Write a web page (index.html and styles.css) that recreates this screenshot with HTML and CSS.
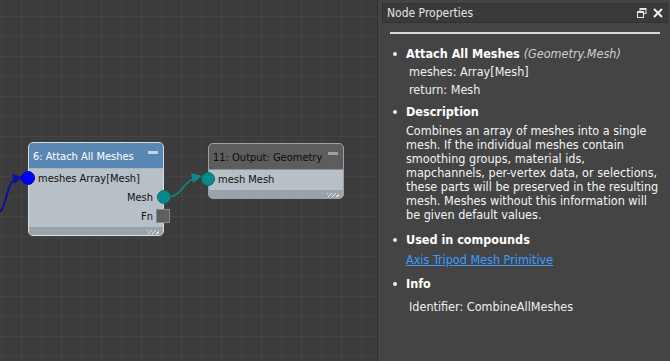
FILE: index.html
```html
<!DOCTYPE html>
<html>
<head>
<meta charset="utf-8">
<link rel="stylesheet" href="styles.css">
</head>
<body>
<div class="app">
  <div class="canvas">
    <svg class="wires" width="377" height="361" viewBox="0 0 377 361">
      <path d="M0 212 C 8 204, 6 180, 18 178" fill="none" stroke="#1010a0" stroke-width="2"/>
      <polygon points="23,177 12,174 14,184" fill="#1010a0"/>
      <path d="M168 197 C 182 197, 184 178, 200 177" fill="none" stroke="#0a8b8b" stroke-width="1.5"/>
      <polygon points="202,176 191,173 193,183" fill="#0a8b8b"/>
    </svg>

    <div class="node node-attach">
      <div class="node-head head-blue">6: Attach All Meshes<span class="minbar"></span></div>
      <div class="node-body">
        <div class="row row-in"><span class="port port-blue port-left"></span>meshes Array[Mesh]</div>
        <div class="row row-out">Mesh<span class="port port-teal port-right"></span></div>
        <div class="row row-out">Fn<span class="port-fn"></span></div>
      </div>
      <div class="node-foot"><span class="grip"></span></div>
    </div>

    <div class="node node-output">
      <div class="node-head head-gray">11: Output: Geometry<span class="minbar"></span></div>
      <div class="node-body">
        <div class="row row-in"><span class="port port-teal port-left"></span>mesh Mesh</div>
      </div>
      <div class="node-foot"><span class="grip"></span></div>
    </div>
  </div>

  <div class="panel">
    <div class="titlebar">
      <span class="title">Node Properties</span>
      <span class="tb-icons">
        <svg width="10" height="10" viewBox="0 0 10 10"><rect x="3" y="0.5" width="6" height="5" fill="none" stroke="#e6e6e6" stroke-width="1"/><rect x="3" y="0.5" width="6" height="1.5" fill="#e6e6e6"/><rect x="0.5" y="3.5" width="6" height="6" fill="#3b3b3b" stroke="#e6e6e6" stroke-width="1"/><rect x="0.5" y="3.5" width="6" height="1.5" fill="#e6e6e6"/></svg>
        <svg width="10" height="10" viewBox="0 0 10 10"><path d="M1 1 L9 9 M9 1 L1 9" stroke="#f0f0f0" stroke-width="2"/></svg>
      </span>
    </div>
    <div class="content">
      <hr class="rule">
      <ul class="props">
        <li>
          <div class="heading">Attach All Meshes <em class="type">(Geometry.Mesh)</em></div>
          <div class="sub">meshes: Array[Mesh]</div>
          <div class="sub">return: Mesh</div>
        </li>
        <li>
          <div class="heading">Description</div>
          <p class="desc">Combines an array of meshes into a single mesh. If the individual meshes contain smoothing groups, material ids, mapchannels, per-vertex data, or selections, these parts will be preserved in the resulting mesh. Meshes without this information will be given default values.</p>
        </li>
        <li>
          <div class="heading">Used in compounds</div>
          <a class="link" href="#">Axis Tripod Mesh Primitive</a>
        </li>
        <li>
          <div class="heading">Info</div>
          <div class="sub sub-info">Identifier: CombineAllMeshes</div>
        </li>
      </ul>
    </div>
  </div>
</div>
</body>
</html>
```

FILE: styles.css
```css
* { box-sizing: border-box; }
html, body { margin: 0; padding: 0; }
body {
  width: 670px;
  height: 361px;
  overflow: hidden;
  background: #3c3c3c;
  font-family: "DejaVu Sans Condensed", "DejaVu Sans", sans-serif;
  font-stretch: condensed;
}
.app {
  display: flex;
  width: 670px;
  height: 361px;
}
.canvas {
  position: relative;
  width: 377px;
  height: 361px;
  background-color: #3c3c3c;
  background-image:
    linear-gradient(to right, #444444 1px, transparent 1px),
    linear-gradient(to bottom, #444444 1px, transparent 1px);
  background-size: 20px 20px;
  background-position: 1px 16px;
}
.wires { position: absolute; left: 0; top: 0; }

.node {
  position: absolute;
  width: 136px;
  border: 1px solid #d6dce2;
  border-radius: 5px;
  background: #b7bfc7;
  font-size: 11px;
}
.node-attach { left: 28px; top: 142px; }
.node-output { left: 208px; top: 143px; border-color: #9aa0a6; }
.node-head {
  position: relative;
  height: 26px;
  line-height: 28px;
  padding-left: 4px;
  border-radius: 4px 4px 0 0;
  white-space: nowrap;
}
.head-blue { background: #5a87b2; color: #ffffff; border-bottom: 1px solid #a6b6c6; }
.head-gray { background: #5d5d5d; color: #0a0a0a; border-bottom: 1px solid #8a9096; }
.minbar {
  position: absolute;
  right: 5px;
  top: 8px;
  width: 10px;
  height: 3px;
  background: #c8d4e0;
}
.head-gray .minbar { background: #a0a0a0; }
.node-body { color: #111; }
.row {
  position: relative;
  height: 19px;
  line-height: 19px;
  white-space: nowrap;
}
.row-in { padding-left: 9px; }
.row-out { text-align: right; padding-right: 10px; }
.port {
  position: absolute;
  width: 14px;
  height: 14px;
  border-radius: 50%;
  top: 2px;
}
.port-left { left: -8px; }
.port-right { right: -8px; }
.port-blue { background: #0000ff; border: 1px solid #0000b0; }
.port-teal { background: #088a8a; border: 1px solid #066a6a; }
.port-fn {
  position: absolute;
  right: -7px;
  top: 2px;
  width: 14px;
  height: 14px;
  background: #5e5e5e;
  border: 1px solid #888;
}
.node-foot {
  position: relative;
  height: 8px;
  margin-top: 1px;
  background: #9ba3aa;
  border-radius: 0 0 4px 4px;
}
.grip {
  position: absolute;
  right: 4px;
  bottom: 1px;
  width: 12px;
  height: 4px;
  background: repeating-linear-gradient(135deg, #e4e8ec 0 1px, transparent 1px 3px);
}

.panel {
  width: 293px;
  height: 361px;
  background: #444444;
  border-left: 1px solid #2e2e2e;
  padding: 3px 2px 0 4px;
  color: #f2f2f2;
}
.titlebar {
  display: flex;
  align-items: center;
  justify-content: space-between;
  height: 20px;
  background: #3a3a3a;
  border: 1px solid #333;
  padding: 0 4px 0 4px;
  font-size: 12px;
  color: #e4e4e4;
}
.tb-icons { display: flex; gap: 6px; align-items: center; }
.tb-icons svg { display: block; }
.content { padding: 0 6px 0 8px; }
.rule {
  border: 0;
  height: 2px;
  background: #d8d8d8;
  margin: 9px 2px 0 0;
}
.props {
  list-style: none;
  margin: 0;
  padding: 0;
  font-size: 12.5px;
}
.props li {
  position: relative;
  padding-left: 16px;
}
.props li::before {
  content: "";
  position: absolute;
  left: 3px;
  top: 10px;
  width: 4px;
  height: 4px;
  border-radius: 50%;
  background: #f0f0f0;
}
.props li:first-child::before { top: 18px; }
.heading {
  font-weight: bold;
  line-height: 18px;
  padding-top: 3px;
  color: #ffffff;
}
.props li:first-child .heading { padding-top: 11px; }
.type { font-weight: normal; color: #d0d0d0; }
.sub {
  padding-left: 3px;
  line-height: 18px;
  color: #f0f0f0;
}
.desc {
  margin: 3px 0 6px 0;
  line-height: 14px;
  color: #f4f4f4;
  width: 258px;
}
.props li:first-child { padding-bottom: 1px; }
.link {
  display: inline-block;
  color: #3a9eff;
  text-decoration: underline;
  line-height: 18px;
  margin: 2px 0 3px;
}
.sub-info { margin-top: 5px; }
```
